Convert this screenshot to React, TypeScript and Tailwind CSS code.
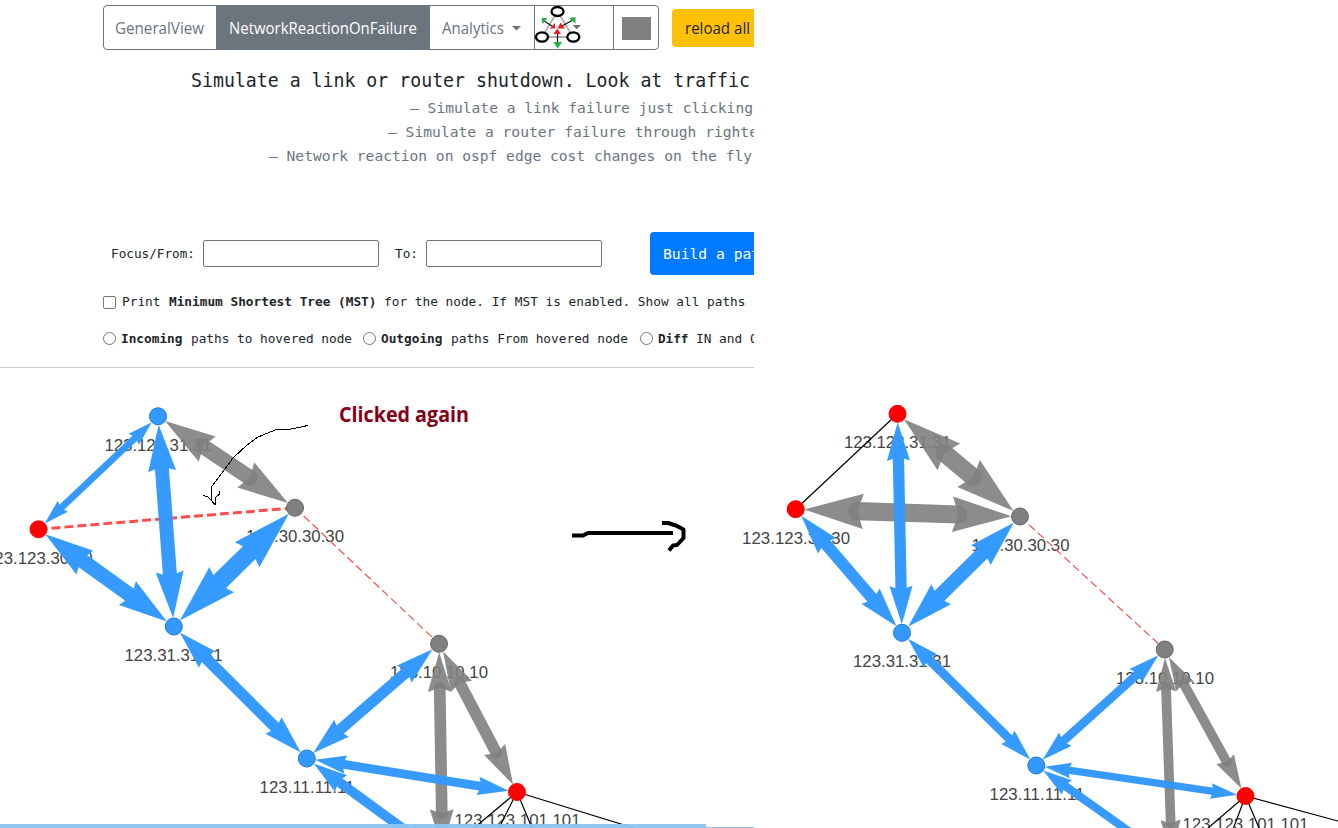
import React from "react";

type P = [number, number];
type EdgeSpec = { from: P; to: P; w: number; kind: "blue" | "gray" };
type NodeSpec = { at: P; kind: "blue" | "gray" | "red"; label?: string; lx?: number; ly?: number; lw?: number };

const TINT = {
  blue: { fill: "#3399ff", stroke: "#1f78cc", alpha: 0.985 },
  gray: { fill: "#808080", stroke: "#666666", alpha: 0.9 },
  red: { fill: "#ff0000", stroke: "#ff0000", alpha: 1 },
};

function Edge({ from, to, w, kind }: EdgeSpec) {
  const dx = to[0] - from[0];
  const dy = to[1] - from[1];
  const d = Math.hypot(dx, dy);
  const deg = (Math.atan2(dy, dx) * 180) / Math.PI;
  const L = 3 * w + 4.5;
  const r = 8.5;
  const head = `0,0 ${L},${0.3 * L} ${0.9 * L},0 ${L},${-0.3 * L}`;
  const c = TINT[kind];
  return (
    <g transform={`translate(${from[0]} ${from[1]}) rotate(${deg})`} fill={c.fill} stroke={c.fill}>
      <line x1={r + 0.9 * L} x2={d - r - 0.9 * L} y1={0} y2={0} strokeWidth={w} strokeLinecap="round" opacity={c.alpha} />
      <polygon points={head} transform={`translate(${r} 0)`} stroke="none" opacity={c.alpha} />
      <polygon points={head} transform={`translate(${d - r} 0) scale(-1 1)`} stroke="none" opacity={c.alpha} />
    </g>
  );
}

function Graph({ nodes, edges, children }: { nodes: NodeSpec[]; edges: EdgeSpec[]; children?: React.ReactNode }) {
  return (
    <g>
      {nodes.map((n, i) =>
        n.label ? (
          <text key={i} x={n.lx} y={n.ly} textLength={n.lw} fontSize={16.8} fill="#444444" fontFamily="Liberation Sans, Arial, sans-serif">
            {n.label}
          </text>
        ) : null,
      )}
      {children}
      {edges.map((e, i) => (
        <Edge key={i} {...e} />
      ))}
      {nodes.map((n, i) => (
        <circle key={i} cx={n.at[0]} cy={n.at[1]} r={8.5} fill={TINT[n.kind].fill} stroke={TINT[n.kind].stroke} />
      ))}
    </g>
  );
}

const A: P = [158, 416.3], B: P = [38.5, 529.3], C: P = [173.8, 626.5], D: P = [295, 507.8];
const E: P = [439, 643.8], F: P = [306.8, 758.5], G: P = [517, 792], H: P = [442.5, 857.5];
const A2: P = [897.5, 413.8], B2: P = [795.7, 509.2], C2: P = [902, 632.8], D2: P = [1020, 516.5];
const E2: P = [1164.7, 649.5], F2: P = [1036.3, 765.5], G2: P = [1245.5, 796], H2: P = [1172, 862];

const leftEdges: EdgeSpec[] = [
  { from: A, to: D, w: 15.4, kind: "gray" },
  { from: E, to: H, w: 11.7, kind: "gray" },
  { from: E, to: G, w: 11.7, kind: "gray" },
  { from: A, to: B, w: 6.8, kind: "blue" },
  { from: A, to: C, w: 14, kind: "blue" },
  { from: B, to: C, w: 14.7, kind: "blue" },
  { from: D, to: C, w: 18, kind: "blue" },
  { from: C, to: F, w: 11.3, kind: "blue" },
  { from: F, to: E, w: 11, kind: "blue" },
  { from: F, to: G, w: 8.8, kind: "blue" },
  { from: F, to: H, w: 9.8, kind: "blue" },
];

const rightEdges: EdgeSpec[] = [
  { from: A2, to: D2, w: 18, kind: "gray" },
  { from: B2, to: D2, w: 18.2, kind: "gray" },
  { from: E2, to: H2, w: 9.7, kind: "gray" },
  { from: E2, to: G2, w: 9.7, kind: "gray" },
  { from: A2, to: C2, w: 11.3, kind: "blue" },
  { from: B2, to: C2, w: 11.7, kind: "blue" },
  { from: D2, to: C2, w: 14, kind: "blue" },
  { from: C2, to: F2, w: 9, kind: "blue" },
  { from: F2, to: E2, w: 8.7, kind: "blue" },
  { from: F2, to: G2, w: 7.3, kind: "blue" },
  { from: F2, to: H2, w: 8.2, kind: "blue" },
];

const leftNodes: NodeSpec[] = [
  { at: A, kind: "blue", label: "123.123.31.31", lx: 104.5, ly: 451, lw: 107 },
  { at: B, kind: "red", label: "123.123.30.30", lx: -15, ly: 564, lw: 107.5 },
  { at: C, kind: "blue", label: "123.31.31.31", lx: 124.5, ly: 661, lw: 98 },
  { at: D, kind: "gray", label: "123.30.30.30", lx: 246, ly: 542, lw: 98 },
  { at: E, kind: "gray", label: "123.10.10.10", lx: 390, ly: 678, lw: 98 },
  { at: F, kind: "blue", label: "123.11.11.11", lx: 259.5, ly: 793, lw: 95 },
  { at: G, kind: "red", label: "123.123.101.101", lx: 454.5, ly: 826, lw: 126 },
];

const rightNodes: NodeSpec[] = [
  { at: A2, kind: "red", label: "123.123.31.31", lx: 844, ly: 448, lw: 107 },
  { at: B2, kind: "red", label: "123.123.30.30", lx: 742, ly: 544, lw: 108 },
  { at: C2, kind: "blue", label: "123.31.31.31", lx: 853, ly: 667, lw: 98 },
  { at: D2, kind: "gray", label: "123.30.30.30", lx: 971.5, ly: 551, lw: 98 },
  { at: E2, kind: "gray", label: "123.10.10.10", lx: 1116, ly: 684, lw: 98 },
  { at: F2, kind: "blue", label: "123.11.11.11", lx: 989.5, ly: 800, lw: 95 },
  { at: G2, kind: "red", label: "123.123.101.101", lx: 1182.5, ly: 830, lw: 126 },
];

function Topology() {
  return (
    <svg width="1338" height="460" viewBox="0 368 1338 460" className="block">
      <Graph nodes={leftNodes} edges={leftEdges}>
        <line x1={B[0]} y1={B[1]} x2={D[0]} y2={D[1]} stroke="#ff4d4d" strokeWidth="3" strokeDasharray="9 4" />
        <line x1={D[0]} y1={D[1]} x2={E[0]} y2={E[1]} stroke="#ff5050" strokeWidth="1.2" strokeDasharray="8 4" />
        <path d="M517 792L474 828M517 792L499 828M517 792L532 828M517 792L634 828" stroke="#000" strokeWidth="1.2" />
      </Graph>
      <Graph nodes={rightNodes} edges={rightEdges}>
        <line x1={D2[0]} y1={D2[1]} x2={E2[0]} y2={E2[1]} stroke="#ff5050" strokeWidth="1.2" strokeDasharray="8 4" />
        <path d="M897.5 413.8L795.7 509.2M1245.5 796L1208 828M1245.5 796L1233.5 828M1245.5 796L1259 828M1245.5 796L1338 821" stroke="#000" strokeWidth="1.2" />
      </Graph>
      <path
        d="M308 425.500L291 429L276.500 429.500L258 437L247 445L233 458L222 473L211.500 487V501M203.500 495.500L208 497L215.500 505M215.500 505V497.500L219.500 494V491"
        fill="none"
        stroke="#000"
        strokeWidth="1"
        shapeRendering="crispEdges"
      />
      <path d="M572 535.500H583L588 533H673M662 523H668L676 525.500L683.500 529.500V538L677 545L673 545.500L669 550.500" fill="none" stroke="#000" strokeWidth="4" strokeLinejoin="round" />
      <rect x="706" y="827" width="48" height="1" fill="#9cc0e2" />
      <rect x="0" y="824" width="706" height="4" fill="#8cc4f2" fillOpacity="0.95" />
    </svg>
  );
}

function PhysicsIcon() {
  return (
    <svg width="47" height="43" viewBox="535 6 47 43" className="block">
      <path d="M557.500 11.500L542 37H573Z" fill="none" stroke="#999" strokeWidth="1.400" />
      <path d="M557.500 44V32M544 21L552 26M573 20L562 26" stroke="#111" strokeWidth="1.200" />
      <g fill="#fff" stroke="#000" strokeWidth="2.300">
        <ellipse cx="557.500" cy="11.500" rx="6" ry="4.500" />
        <ellipse cx="542" cy="37" rx="6" ry="4.700" />
        <ellipse cx="573.300" cy="37" rx="6" ry="4.700" />
      </g>
      <path d="M557.200 28.500L561 34H553.500ZM555 23V28.500H549.500ZM560.500 22.500L565 28.500H557.500Z" fill="#ed1c24" />
      <path d="M553.500 42H562L557.700 48.700ZM541.500 18H547.500L542.500 24ZM569 18L575.500 17V23.500Z" fill="#22b14c" />
      <path d="M572.500 25H581L576.700 29.300Z" fill="#6c757d" />
    </svg>
  );
}

function Fit({ w, size, color = "#212529", bold = false, family = "DejaVu Sans Mono, monospace", children }: { w: number; size: number; color?: string; bold?: boolean; family?: string; children: string }) {
  return (
    <svg width={w} height={size * 1.5} className="block shrink-0 overflow-visible">
      <text x="0" y={size * 1.1} textLength={w} lengthAdjust="spacingAndGlyphs" fontSize={size} fill={color} fontWeight={bold ? 700 : 400} fontFamily={family}>
        {children}
      </text>
    </svg>
  );
}

export default function App() {
  return (
    <main className="h-[828px] w-[1338px] overflow-hidden bg-white font-['Open_Sans',sans-serif] text-[#212529]">
      <header className="h-[368px] w-[754px] overflow-hidden border-b border-[#cfcfcf]">
        <div className="flex h-[60px] pt-[5px] pl-[103px]">
          <nav className="flex h-[45px] w-[556px] shrink-0 overflow-hidden rounded border border-[#6c757d] text-[16px] text-[#6c757d]">
            <div className="flex w-[112px] items-center pt-0.5 pl-[11px]"><Fit w={89} size={15.6} color="#6c757d" family="Open Sans, sans-serif">GeneralView</Fit></div>
            <div className="flex w-[214px] items-center bg-[#6c757d] pt-0.5 pl-[13px]"><Fit w={188} size={15.6} color="#ffffff" family="Open Sans, sans-serif">NetworkReactionOnFailure</Fit></div>
            <div className="flex w-[105px] items-center border-r border-[#6c757d] pt-0.5 pl-[12px]">
              <Fit w={62} size={15.6} color="#6c757d" family="Open Sans, sans-serif">Analytics</Fit>
              <svg width="10" height="5" className="ml-2"><path d="M0 0H9L4.500 4.500Z" fill="#6c757d" /></svg>
            </div>
            <div className="w-[79px] border-r border-[#6c757d]"><PhysicsIcon /></div>
            <div className="flex flex-1 items-center justify-center"><div className="mt-px h-[23px] w-[29px] bg-[#808080]" /></div>
          </nav>
          <div className="mt-1 ml-[13px] flex h-[38px] w-[100px] shrink-0 items-center rounded bg-[#ffc107] pt-0.5 pl-[13px]"><Fit w={65} size={15.6} family="Open Sans, sans-serif">reload all</Fit></div>
        </div>
        <div className="flex h-[36px] items-center pt-1 pl-[191px]"><Fit w={559} size={19}>Simulate a link or router shutdown. Look at traffic</Fit></div>
        <div className="flex h-6 items-center pl-[410px]"><Fit w={343} size={14.5} color="#6c757d">— Simulate a link failure just clicking</Fit></div>
        <div className="flex h-6 items-center pl-[388px]"><Fit w={370} size={14.5} color="#6c757d">— Simulate a router failure through righte</Fit></div>
        <div className="flex h-6 items-center pl-[269px]"><Fit w={483} size={14.5} color="#6c757d">— Network reaction on ospf edge cost changes on the fly</Fit></div>
        <div className="mt-[64px] flex h-[43px] items-center pl-[111px]">
          <Fit w={84} size={12.8}>Focus/From:</Fit>
          <input aria-label="Focus/From" className="ml-2 h-[27px] w-[176px] shrink-0 rounded-xs border border-[#767676]" />
          <div className="ml-4 shrink-0"><Fit w={23} size={12.8}>To:</Fit></div>
          <input aria-label="To" className="ml-2 h-[27px] w-[176px] shrink-0 rounded-xs border border-[#767676]" />
          <div className="ml-12 flex h-[43px] w-[150px] shrink-0 items-center rounded bg-[#007bff] pl-[13px]"><Fit w={106} size={14.6} color="#ffffff">Build a path</Fit></div>
        </div>
        <div className="mt-[15px] flex h-6 items-center pl-[103px]">
          <span className="mr-1.5 size-[13px] shrink-0 rounded-[2px] border border-[#767676]" />
          <Fit w={38.5} size={12.8}>Print</Fit><span className="w-[8px] shrink-0" />
          <Fit w={207.5} size={12.8} bold>Minimum Shortest Tree (MST)</Fit><span className="w-[8px] shrink-0" />
          <Fit w={361.5} size={12.8}>for the node. If MST is enabled. Show all paths</Fit>
        </div>
        <div className="mt-[13px] flex h-6 items-center pl-[103px]">
          <span className="mr-[5px] mb-0.5 size-[13px] shrink-0 rounded-full border border-[#767676]" />
          <Fit w={61.5} size={12.8} bold>Incoming</Fit><span className="w-[8px] shrink-0" />
          <Fit w={161} size={12.8}>paths to hovered node</Fit>
          <span className="mr-[5px] mb-0.5 ml-[11.5px] size-[13px] shrink-0 rounded-full border border-[#767676]" />
          <Fit w={61.5} size={12.8} bold>Outgoing</Fit><span className="w-[8px] shrink-0" />
          <Fit w={177} size={12.8}>paths From hovered node</Fit>
          <span className="mr-[5px] mb-0.5 ml-[12px] size-[13px] shrink-0 rounded-full border border-[#767676]" />
          <Fit w={30.5} size={12.8} bold>Diff</Fit><span className="w-[8px] shrink-0" />
          <Fit w={77} size={12.8}>IN and OUT</Fit>
        </div>
      </header>
      <section className="relative h-[460px]">
        <Topology />
        <div className="absolute top-[30px] left-[339px] w-[130px]">
          <Fit w={130} size={22} bold color="#880015" family="Open Sans, sans-serif">Clicked again</Fit>
        </div>
      </section>
    </main>
  );
}
